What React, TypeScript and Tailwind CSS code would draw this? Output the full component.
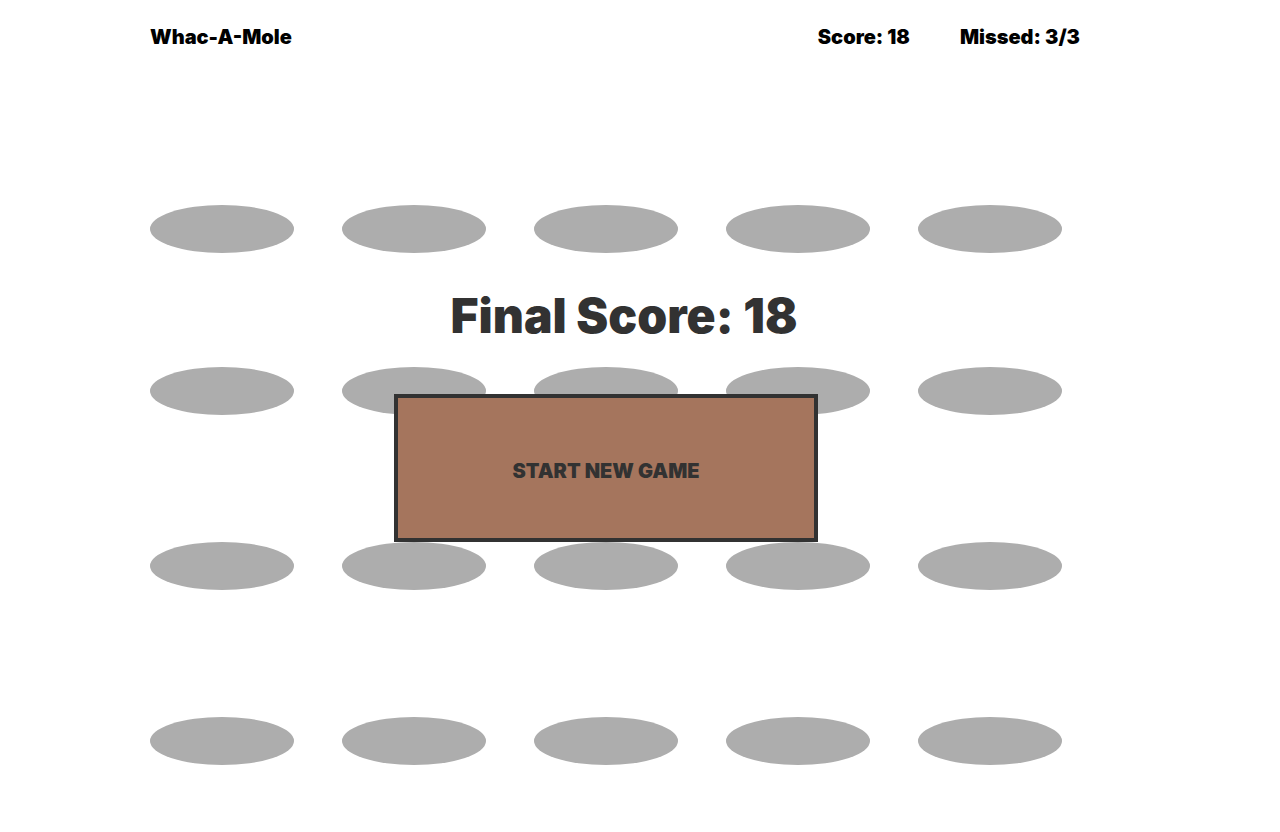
const rows = [0, 1, 2, 3];
const columns = [0, 1, 2, 3, 4];

export default function App() {
  const score = 18;
  const missed = 3;

  return (
    <div className="relative min-h-screen bg-white pl-[150px] font-['Inter',sans-serif] font-black text-black">
      <header className="flex w-full max-w-[930px] items-center justify-between pt-6 text-xl leading-[26px]">
        <h1>Whac-A-Mole</h1>
        <div className="flex gap-[50px]">
          <p>Score: {score}</p>
          <p>Missed: {missed}/3</p>
        </div>
      </header>

      <main className="flex w-full max-w-[912px] flex-col gap-[127px] pt-[155px]">
        {rows.map((row) => (
          <div
            key={row}
            className={row === 1 ? "-mt-[13px] grid grid-cols-5 gap-12" : "grid grid-cols-5 gap-12"}
          >
            {columns.map((column) => (
              <div key={column} className="h-12 rounded-[50%] bg-[#adadad]" />
            ))}
          </div>
        ))}
      </main>

      <section className="absolute left-[394px] top-[286px] flex w-[424px] flex-col text-[#323232]">
        <h2 className="self-center whitespace-nowrap pl-9 text-5xl leading-[60px]">
          Final Score: {score}
        </h2>
        <button
          type="button"
          className="mt-12 h-[148px] w-full border-4 border-[#323232] bg-[#a5755d] pt-1.5 text-xl font-black"
        >
          START NEW GAME
        </button>
      </section>
    </div>
  );
}
